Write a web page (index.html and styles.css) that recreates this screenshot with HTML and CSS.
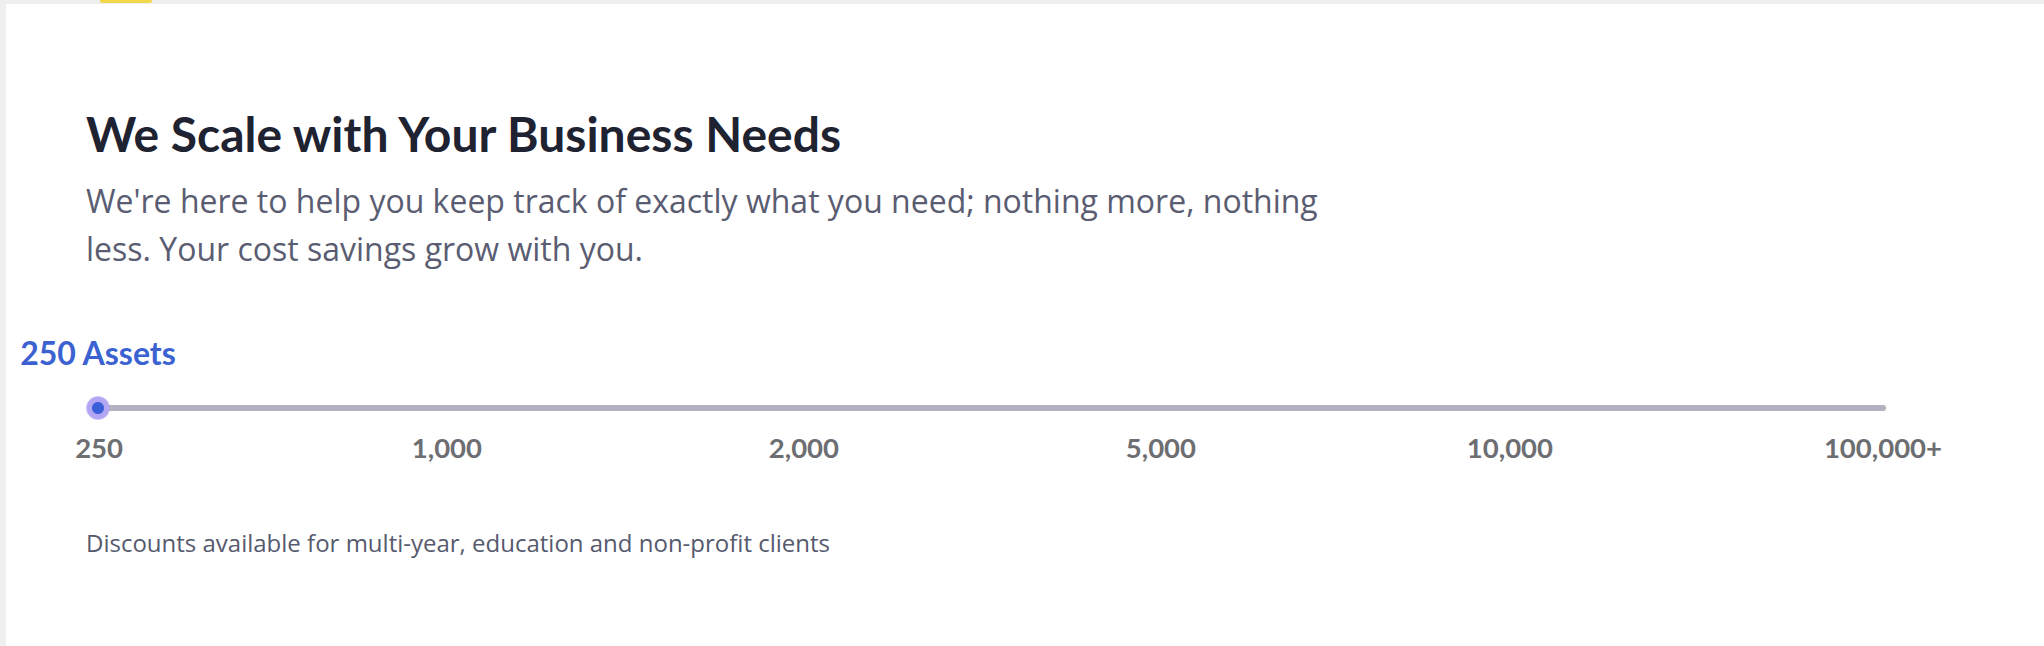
FILE: index.html
```html
<!DOCTYPE html>
<html lang="en">
<head>
<meta charset="utf-8">
<title>We Scale with Your Business Needs</title>
<link rel="stylesheet" href="styles.css">
</head>
<body>
<div class="topbar"><span class="tab"></span></div>
<main class="panel">
  <h1 class="title">We Scale with Your Business Needs</h1>
  <p class="lead">We're here to help you keep track of exactly what you need; nothing more, nothing less. Your cost savings grow with you.</p>
  <div class="value">250 Assets</div>
  <div class="slider">
    <div class="track"><span class="thumb"></span></div>
  </div>
  <div class="marks">
    <span class="mark">250</span>
    <span class="mark">1,000</span>
    <span class="mark">2,000</span>
    <span class="mark">5,000</span>
    <span class="mark">10,000</span>
    <span class="mark">100,000+</span>
  </div>
  <p class="note">Discounts available for multi-year, education and non-profit clients</p>
</main>
</body>
</html>
```
FILE: styles.css
```css
html, body {
  margin: 0;
  padding: 0;
}
body {
  background: #efefef;
  width: 2044px;
  height: 646px;
  overflow: hidden;
}
.topbar {
  height: 4px;
  display: flex;
}
.tab {
  display: block;
  margin-left: 100px;
  width: 52px;
  height: 3px;
  background: #f1d84b;
  border-radius: 0 0 2px 2px;
}
.panel {
  margin-left: 6px;
  height: 642px;
  background: #ffffff;
  padding: 101px 0 0 80px;
  box-sizing: border-box;
}
.title {
  margin: 0;
  font-family: Lato, "Liberation Sans", sans-serif;
  font-weight: 700;
  font-size: 48px;
  line-height: 1.2;
  color: #1e2231;
}
.lead {
  margin: 14px 0 0 0;
  width: 1260px;
  font-family: "Open Sans", "Liberation Sans", sans-serif;
  font-size: 32px;
  line-height: 48px;
  color: #5a5d72;
}
.value {
  margin: 61px 0 0 -88px;
  width: 200px;
  text-align: center;
  font-family: Lato, "Liberation Sans", sans-serif;
  font-weight: 700;
  font-size: 32px;
  line-height: 1.2;
  color: #3c62d2;
}
.slider {
  margin: 24px 0 0 12px;
  width: 1788px;
  height: 24px;
  display: flex;
  align-items: center;
}
.track {
  width: 100%;
  height: 6px;
  border-radius: 3px;
  background: #b1b1bf;
  display: flex;
  align-items: center;
}
.thumb {
  flex: none;
  width: 24px;
  height: 24px;
  margin-left: -12px;
  border-radius: 50%;
  background: radial-gradient(circle, #3a5fd9 0 5.5px, #b2a7f3 6.5px 10.5px, rgba(178, 167, 243, 0.5) 12px);
}
.marks {
  margin: 11px 0 0 -20px;
  display: grid;
  grid-template-columns: 57px 359px repeat(3, 357px) 389px;
}
.mark {
  text-align: right;
  white-space: nowrap;
  font-family: Lato, "Liberation Sans", sans-serif;
  font-weight: 700;
  font-size: 27.5px;
  line-height: 1.2;
  color: #6d6e72;
}
.note {
  margin: 63px 0 0 0;
  font-family: "Open Sans", "Liberation Sans", sans-serif;
  font-size: 24px;
  line-height: 32px;
  color: #565a6d;
}
```
